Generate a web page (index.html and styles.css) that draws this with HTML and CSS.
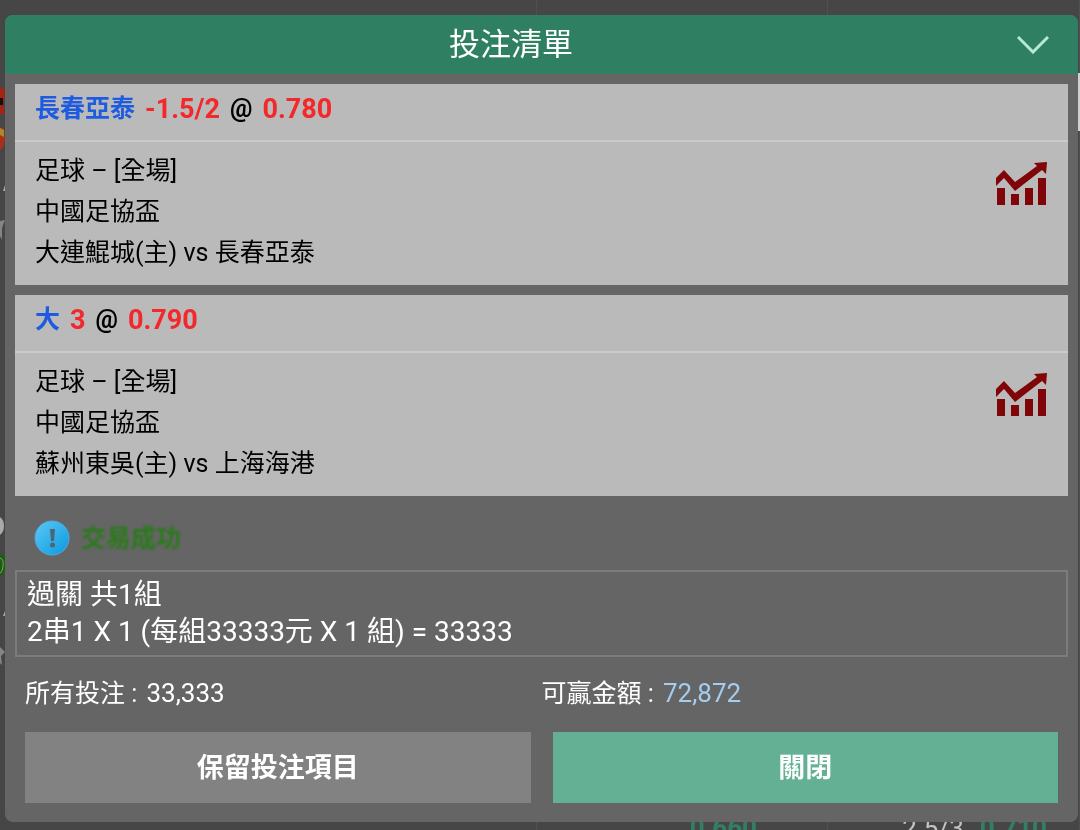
FILE: index.html
```html
<!DOCTYPE html>
<html lang="zh-Hant">
<head>
    <meta charset="UTF-8">
    <meta name="viewport" content="width=device-width, initial-scale=1.0">
    <title>投注清單</title>
    <link rel="stylesheet" href="styles.css">
</head>
<body>
    <!-- match list behind the slip -->
    <div class="match-list" aria-hidden="true">
        <svg class="team-icons" width="5" height="830" viewBox="0 0 5 830">
            <path d="M0 88h4l1 8-2 8 2 10H0z" fill="#a32412"/>
            <path d="M0 98h3v7H0z" fill="#16100e"/>
            <path d="M0 127l4 2 1 10-2 9-3 2z" fill="#a83018"/>
            <path d="M0 128l4 2v7l-4-2z" fill="#a88a2c"/>
            <path d="M5 185l-2 6h2zM5 611l-2 5h2z" fill="#aaa"/>
            <path d="M0 221l5-1-3 8v12l-2-4zM0 647l5 5-4 4 1 9-2-2z" fill="#858585"/>
            <path d="M0 517q4 3 4 9t-4 9z" fill="#a9a9a9"/>
            <path d="M0 554l5 2v11q0 7-5 9z" fill="#1e5a1a"/>
            <path d="M0 558q4 1 3 8t-3 7" fill="none" stroke="#79ad46"/>
        </svg>
        <div class="match-cell"></div>
        <div class="match-cell"><span class="odds-up">0.660</span></div>
        <div class="match-cell"><span>2.5/3</span><span class="odds-up">0.710</span></div>
        <div class="scroll-thumb"></div>
    </div>

    <main class="slip">
        <header class="slip-header">
            <h1>投注清單</h1>
            <button class="collapse" aria-label="收起">
                <svg width="32" height="18" viewBox="0 0 32 18" fill="none" stroke="#b5ead2" stroke-width="3"><path d="M1 1l15 15L31 1"/></svg>
            </button>
        </header>

        <div class="slip-body">
            <section class="bet">
                <h2 class="bet-title"><span class="pick">長春亞泰</span> <span class="odds">-1.5/2</span> <span>@</span> <span class="odds">0.780</span></h2>
                <div class="bet-info">
                    <div>
                        <p>足球 – [全場]</p>
                        <p>中國足協盃</p>
                        <p>大連鯤城(主) vs 長春亞泰</p>
                    </div>
                    <svg class="chart" width="52" height="44" viewBox="0 0 52 44" fill="#800508">
                        <path d="M1 26h8v17H1zM15 32h8v11h-8zM29 26h8v17h-8zM42 16h8v27h-8z"/>
                        <path d="M0 16l8-8 11 12L41 4l-3-3 13-1-1 12-4-4-27 21L8 16l-8 8z"/>
                    </svg>
                </div>
            </section>

            <section class="bet">
                <h2 class="bet-title"><span class="pick">大</span> <span class="odds">3</span> <span>@</span> <span class="odds">0.790</span></h2>
                <div class="bet-info">
                    <div>
                        <p>足球 – [全場]</p>
                        <p>中國足協盃</p>
                        <p>蘇州東吳(主) vs 上海海港</p>
                    </div>
                    <svg class="chart" width="52" height="44" viewBox="0 0 52 44" fill="#800508">
                        <path d="M1 26h8v17H1zM15 32h8v11h-8zM29 26h8v17h-8zM42 16h8v27h-8z"/>
                        <path d="M0 16l8-8 11 12L41 4l-3-3 13-1-1 12-4-4-27 21L8 16l-8 8z"/>
                    </svg>
                </div>
            </section>

            <div class="message">
                <svg width="36" height="36" viewBox="0 0 36 36">
                    <defs>
                        <linearGradient id="blue" x1="0" y1="0" x2="1" y2="1">
                            <stop offset="0" stop-color="#5cc8f6"/>
                            <stop offset="1" stop-color="#0a98e0"/>
                        </linearGradient>
                    </defs>
                    <circle cx="18" cy="18" r="17" fill="url(#blue)" stroke="#51abd8"/>
                    <path d="M16 9h5l-1 12h-3z" fill="#4e6674"/>
                    <circle cx="18.5" cy="25" r="2.5" fill="#4e6674"/>
                </svg>
                <span>交易成功</span>
            </div>

            <div class="parlay">
                <p>過關 共1組</p>
                <p>2串1 X 1 (每組33333元 X 1 組) = 33333</p>
            </div>

            <div class="totals">
                <div>所有投注 : <span class="amount">33,333</span></div>
                <div>可贏金額 : <span class="amount win">72,872</span></div>
            </div>

            <div class="actions">
                <button class="keep">保留投注項目</button>
                <button class="close">關閉</button>
            </div>
        </div>
    </main>
</body>
</html>
```

FILE: styles.css
```css
* {
    box-sizing: border-box;
}

body {
    margin: 0;
    padding: 15px 2px 8px 5px;
    background-color: #464646;
    color: #fff;
    font-family: Roboto, "Noto Sans CJK TC", sans-serif;
    font-size: 25px;
}

h1, h2, p {
    margin: 0;
    font-weight: normal;
}

button {
    border: none;
    padding: 0;
    color: #fff;
    font-family: inherit;
    cursor: pointer;
}

svg {
    display: block;
}

/* page behind the slip */
.match-list {
    position: fixed;
    inset: 0;
    display: grid;
    grid-template-columns: 537fr 291fr 252fr;
    overflow: hidden;
}

.team-icons {
    position: absolute;
    top: 0;
    left: 0;
}

.match-cell {
    display: flex;
    align-items: flex-end;
    justify-content: flex-end;
    gap: 16px;
    height: 842px;
    padding-right: 32px;
    border-right: 1px solid #505050;
    font-size: 26px;
    line-height: 28px;
    color: #c4c4c4;
}

.match-cell:nth-of-type(2) {
    padding-right: 70px;
}

.odds-up {
    color: #328064;
    font-weight: bold;
}

.scroll-thumb {
    position: absolute;
    top: 73px;
    right: 0;
    width: 2px;
    height: 58px;
    background-color: #d0d0d0;
}

.slip {
    position: relative;
    background-color: #656565;
    border-radius: 8px;
    overflow: hidden;
}

.slip-header {
    display: flex;
    align-items: center;
    height: 59px;
    padding-right: 29px;
    background-color: #2f8062;
}

.slip-header h1 {
    flex: 1;
    font-size: 31px;
    line-height: 59px;
    text-align: center;
}

.collapse {
    background: none;
}

.slip-body {
    padding: 10px 10px 19px;
}

.bet {
    margin-bottom: 10px;
    background-color: #bababa;
    color: #000;
}

.bet-title {
    display: flex;
    gap: 10px;
    height: 58px;
    padding: 0 20px;
    border-bottom: 2px solid #cbcbcb;
    font-size: 25px;
    font-weight: bold;
    line-height: 50px;
}

.pick {
    color: #1f5be0;
}

.odds {
    color: #f3282b;
    font-size: 27px;
}

.bet-info {
    display: flex;
    justify-content: space-between;
    padding: 8px 20px 12px;
    line-height: 41px;
}

.chart {
    margin-top: 12px;
}

.message {
    display: flex;
    align-items: center;
    gap: 11px;
    height: 64px;
    padding: 0 19px;
    color: #2b7a1c;
    font-weight: bold;
}

.message span {
    padding-bottom: 4px;
    filter: blur(1px);
}

.parlay {
    padding: 4px 10px 5px;
    border: 2px solid #7c7c7c;
    font-size: 28px;
    line-height: 37px;
}

.totals {
    display: grid;
    grid-template-columns: 1fr 1fr;
    padding: 16px 10px 18px;
    line-height: 41px;
}

.amount {
    margin-left: 3px;
    font-size: 26px;
}

.win {
    color: #a4cdf0;
}

.actions {
    display: grid;
    grid-template-columns: 1fr 1fr;
    gap: 22px;
    padding: 0 10px;
}

.actions button {
    height: 71px;
    padding-bottom: 4px;
    font-size: 27px;
    font-weight: bold;
}

.actions .keep {
    background-color: #828282;
}

.actions .close {
    background-color: #63b094;
}
```
